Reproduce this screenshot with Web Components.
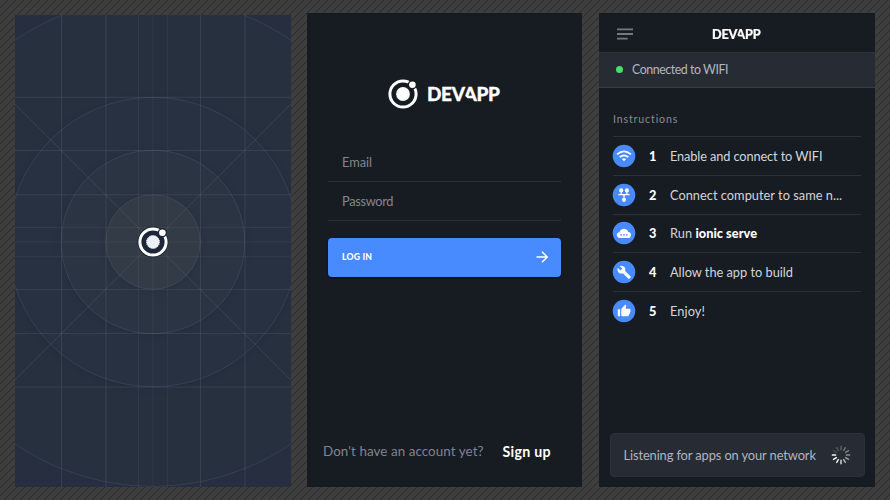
<!DOCTYPE html>
<html lang="en">
<head>
<meta charset="utf-8">
<title>DevApp</title>
<style>
html,body{margin:0;height:100%}
body{width:890px;height:500px;overflow:hidden;font-family:Lato,"Open Sans",sans-serif;-webkit-font-smoothing:antialiased}
</style>
</head>
<body>
<app-board></app-board>
<script>
function define(name, html, setup) {
  const t = document.createElement('template');
  t.innerHTML = html;
  customElements.define(name, class extends HTMLElement {
    constructor() {
      super();
      this.attachShadow({mode: 'open'}).append(t.content.cloneNode(true));
    }
    connectedCallback() { if (setup) setup(this, this.shadowRoot); }
  });
}

/* A single-line label tracked out or in to a given width. */
define('fit-label', `<style>:host{display:block;flex:none;white-space:nowrap}span{display:inline-block;white-space:pre}strong{font-weight:900;color:#fff}</style><span></span>`,
  (el, root) => {
    const s = root.querySelector('span');
    s.innerHTML = el.innerHTML;
    const w = parseFloat(el.getAttribute('w'));
    s.style.letterSpacing = '0px';
    const n = s.textContent.length;
    const natural = parseFloat(getComputedStyle(s).width);
    s.style.letterSpacing = ((w - natural) / (n - 1)).toFixed(3) + 'px';
    el.style.width = w + 'px';
  });

define('ionic-mark', `<style>:host{display:block;flex:none;width:32px;height:32px}svg{display:block;width:100%;height:100%;overflow:visible}</style>
<svg viewBox="0 0 32 32"><circle class="bg" cx="16" cy="16" r="15.5" fill="#1e2737" opacity="0"/>
<circle cx="16" cy="16" r="13.1" fill="none" stroke="#fff" stroke-width="3"/>
<circle cx="25.4" cy="6.7" r="4.7" fill="var(--gap,#171b22)"/><circle cx="25.4" cy="6.7" r="3.3" fill="#fff"/>
<circle class="core" cx="16" cy="16" r="6.9" fill="#fff"/></svg>`,
  (el, root) => {
    if (el.hasAttribute('splash')) {
      root.querySelector('.bg').setAttribute('opacity', '1');
      const c = root.querySelector('.core');
      c.setAttribute('r', '6.5'); c.setAttribute('fill', '#edf0f4');
      c.setAttribute('stroke', '#edf0f4'); c.setAttribute('stroke-dasharray', '1.2 .9');
    }
  });

/* Wordmark; the notch removes the left foot of the A. */
define('dev-wordmark', `<style>:host{display:block;position:relative;flex:none;color:#fff;font-weight:900;font-size:19px;line-height:24px;width:74px;height:24px}
svg{position:absolute;inset:0;width:74px;height:24px}fit-label{-webkit-text-stroke:.3px #fff}</style>
<fit-label w="73">DEVAPP</fit-label><svg viewBox="0 0 74 24"><path d="M34.6 20.5L37.6 13.4L41.6 17V20.5Z" fill="#171b22"/></svg>`);

define('splash-screen', `<style>:host{display:grid;place-items:center;width:276px;height:472px;background:#262e40;overflow:hidden;--gap:#1e2737}
svg,ionic-mark{grid-area:1/1}svg{display:block;width:276px;height:472px}ionic-mark{transform:translateY(-9px)}</style>
<svg viewBox="15 15 276 472" fill="none"><defs><filter id="s" color-interpolation-filters="sRGB" x="-20%" y="-20%" width="140%" height="140%"><feDropShadow dx="0" dy="1" stdDeviation="3" flood-color="#141b28" flood-opacity=".2"/></filter></defs>
<circle cx="153" cy="242" r="244.5" fill="#27303f"/>
<g filter="url(#s)"><circle cx="153" cy="242" r="145" fill="#283141"/></g>
<g filter="url(#s)"><circle cx="153" cy="242" r="92" fill="#2b3443"/></g>
<g filter="url(#s)"><circle cx="153" cy="242" r="47.3" fill="#323b46"/></g>
<g stroke="#8597a5" stroke-opacity=".17"><circle cx="153" cy="242" r="244.5"/><circle cx="153" cy="242" r="144.8"/><circle cx="153" cy="242" r="91.7"/><circle cx="153" cy="242" r="47.3"/>
<path d="M61.5 15V487M106 15V487M200.5 15V487M245 15V487M15 97.3H291M15 150.5H291M15 194.8H291M15 289.7H291M15 333.5H291M15 387.1H291M15 104L153 242L291 104M15 380L153 242L291 380"/>
<path stroke-opacity=".1" d="M138.5 15V487M153 15V487M167.7 15V487M15 227.5H291M15 242H291M15 256.7H291"/></g></svg>
<ionic-mark splash></ionic-mark>`);

define('text-field', `<style>:host{display:flex;align-items:center;box-sizing:border-box;height:39px;padding-left:14px;border-bottom:1px solid #2c3037;color:#84878c;font-size:12.8px}</style><slot></slot>`);

define('login-screen', `<style>:host{display:flex;flex-direction:column;width:275px;height:474px;background:#171b22;box-sizing:border-box}
.logo{display:flex;align-items:center;gap:8px;padding:65px 0 0 80px}
form{display:block;margin:32.5px 21px 0}
button{display:flex;align-items:center;justify-content:space-between;width:100%;height:39px;margin-top:17px;padding:0 12px 0 14px;border:0;border-radius:4px;background:#488aff;color:#fff;font:900 8.6px Lato,sans-serif;box-shadow:0 1px 2px #0008}
button svg{width:14px;height:14px}
footer{display:flex;align-items:center;margin:auto 0 0;padding:0 0 26px 16px;font-size:13.4px;line-height:19px;color:#80848f}
footer .up{margin-left:19px;color:#fff;font-weight:700;font-size:14.2px}</style>
<div class="logo"><ionic-mark></ionic-mark><dev-wordmark></dev-wordmark></div>
<form><text-field><fit-label w="30">Email</fit-label></text-field><text-field><fit-label w="51.5">Password</fit-label></text-field>
<button type="button"><fit-label w="30">LOG IN</fit-label><svg viewBox="0 0 14 14" fill="none" stroke="#fff" stroke-width="1.5"><path d="M1.5 7H12M7 1.8L12.2 7L7 12.2"/></svg></button></form>
<footer><fit-label w="160.5">Don't have an account yet?</fit-label><fit-label class="up" w="48">Sign up</fit-label></footer>`);

const glyphs = {
  wifi: '<g fill="none" stroke="#fff" stroke-width="1.75"><path d="M5.1 10.4Q12 4.2 18.9 10.4"/><path d="M7.7 13.2Q12 9.5 16.3 13.2"/></g><path d="M9.9 15.1Q12 13.6 14.1 15.1L12 17.2Z" fill="#fff"/>',
  net: '<g fill="#fff"><circle cx="9.2" cy="7.4" r="2.1"/><circle cx="14.9" cy="7.4" r="2.1"/><circle cx="12" cy="16.8" r="2.1"/></g><path d="M6.4 11.7H17.6M9.2 8V11.7M14.9 8V11.7M12 11.7V16" fill="none" stroke="#fff" stroke-width="1.3"/>',
  cloud: '<path d="M8 17C3.8 17 3.8 11.6 7.5 11.3C8.4 6.6 14.9 6.5 16.2 10.9C20 11 20 17 16.2 17Z" fill="#fff"/><g fill="#488aff"><circle cx="9.1" cy="13.9" r=".8"/><circle cx="12" cy="13.9" r=".8"/><circle cx="14.9" cy="13.9" r=".8"/></g>',
  wrench: '<path transform="translate(4.8 5) scale(.61)" d="M22.7 19l-9.1-9.1c.9-2.3.4-5-1.5-6.9-2-2-5-2.4-7.4-1.3L9 6 6 9 1.6 4.7C.4 7.1.9 10.1 2.9 12.1c1.9 1.9 4.6 2.4 6.9 1.5l9.1 9.1c.4.4 1 .4 1.4 0l2.3-2.3c.5-.4.5-1.1.1-1.4z" fill="#fff"/>',
  thumb: '<path transform="translate(5.2 5) scale(.58)" d="M1 21h4V9H1v12zm22-11c0-1.1-.9-2-2-2h-6.3l.95-4.57.03-.32c0-.41-.17-.79-.44-1.06L14.17 1 7.59 7.59C7.22 7.95 7 8.45 7 9v10c0 1.1.9 2 2 2h9c.83 0 1.54-.5 1.84-1.22l3.02-7.05c.09-.23.14-.47.14-.73v-2z" fill="#fff"/>'
};
define('step-row', `<style>:host{display:flex;align-items:center;box-sizing:border-box;height:38.8px;border-top:1px solid #2c3037;font-size:12.8px;color:#d3d6dc}
svg{flex:none;display:block;width:24px;height:24px;margin-left:-1px}b{width:8px;margin-left:13px;margin-right:13px;font-weight:900;color:#fff}</style>
<svg viewBox="0 0 24 24"><circle cx="12" cy="12" r="11.3" fill="#488aff"/><g></g></svg><b></b><slot></slot>`,
  (el, root) => {
    root.querySelector('g').innerHTML = glyphs[el.getAttribute('icon')];
    root.querySelector('b').textContent = el.getAttribute('n');
  });

define('wait-spinner', `<style>:host{display:block;flex:none;width:20px;height:20px}svg{display:block}</style><svg width="20" height="20" viewBox="-10 -10 20 20" stroke="#fff" stroke-width="1.4"></svg>`,
  (el, root) => {
    const fade = [.25,.33,.4,.48,.55,.68,.85,.95,1,1,.15,.2];
    root.querySelector('svg').innerHTML = fade.map((a, i) => `<path d="M0-4.8V-9.2" transform="rotate(${i * 30})" opacity="${a}"/>`).join('');
  });

define('steps-screen', `<style>:host{display:flex;flex-direction:column;width:276px;height:474px;background:#171b22}
header{display:flex;align-items:center;height:39px;padding:2px 0 0 18px;box-sizing:border-box}
header svg{width:17px;height:12px;flex:none}
dev-wordmark{transform:scale(.667);transform-origin:0 50%;margin-left:78.3px}
.status{display:flex;align-items:center;box-sizing:border-box;height:36px;padding:0 0 2px 17px;background:#272b34;border-top:1px solid #2d323b;border-bottom:1px solid #373d48;font-size:12.4px;color:#b3b7c1}
.dot{width:7px;height:7px;border-radius:50%;background:#4cdc69;margin-right:9px}
h2{margin:23px 0 0 14px;font-size:10.6px;line-height:16px;font-weight:400;color:#8b8e95}
.list{margin:9px 14px 0}
.toast{display:flex;align-items:center;box-sizing:border-box;height:44px;margin:auto 10.5px 10px;padding:0 13px;border-radius:4px;background:#272b34;border:1px solid #2b3039;color:#b0b5c1;font-size:12.9px}
wait-spinner{margin-left:15px}</style>
<header><svg viewBox="0 0 17 12" stroke="#747a85" stroke-width="1.8"><path d="M0 1.3H16M0 6H16M0 10.7H10.7"/></svg><dev-wordmark></dev-wordmark></header>
<div class="status"><i class="dot"></i><fit-label w="96.5">Connected to WIFI</fit-label></div>
<h2><fit-label w="64.5">Instructions</fit-label></h2>
<div class="list">
<step-row icon="wifi" n="1"><fit-label w="152.5">Enable and connect to WIFI</fit-label></step-row>
<step-row icon="net" n="2"><fit-label w="172">Connect computer to same n...</fit-label></step-row>
<step-row icon="cloud" n="3"><fit-label w="87">Run <strong>ionic serve</strong></fit-label></step-row>
<step-row icon="wrench" n="4"><fit-label w="123">Allow the app to build</fit-label></step-row>
<step-row icon="thumb" n="5"><fit-label w="35">Enjoy!</fit-label></step-row>
</div>
<div class="toast"><fit-label w="192.5">Listening for apps on your network</fit-label><wait-spinner></wait-spinner></div>`);

define('app-board', `<style>:host{display:flex;align-items:flex-end;box-sizing:border-box;width:890px;height:500px;padding:0 15px 13px;background:repeating-linear-gradient(135deg,#2b2b2b 0,#3e3e3e .75px,#3e3e3e 4.907px,#2b2b2b 5.657px)}
login-screen{margin-left:16px}steps-screen{margin-left:17px}</style>
<splash-screen></splash-screen><login-screen></login-screen><steps-screen></steps-screen>`);
</script>
</body>
</html>
